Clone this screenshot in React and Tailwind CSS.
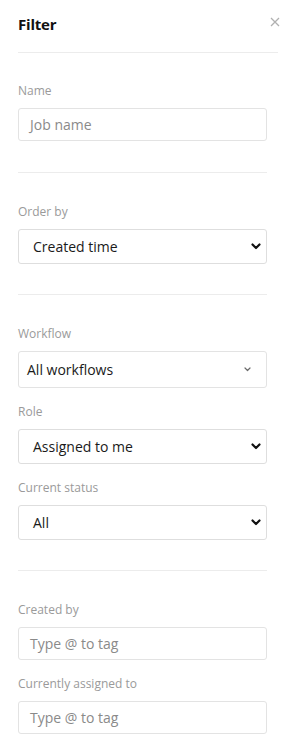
function Chevron({ thin }) {
  if (thin) {
    return (
      <svg width="7" height="5" viewBox="0 0 7 5" fill="none" stroke="#6b6b6b" strokeWidth="1.2" strokeLinecap="round" strokeLinejoin="round">
        <path d="M1 1l2.5 2.5L6 1" />
      </svg>
    );
  }
  return (
    <svg width="10" height="7" viewBox="0 0 10 7" fill="none" stroke="#111111" strokeWidth="2.2" strokeLinecap="round" strokeLinejoin="round">
      <path d="M1.5 1.5L5 5l3.5-3.5" />
    </svg>
  );
}

function Label({ children }) {
  return <div className="text-[12px] leading-[16px] text-[#9a9a9a] mb-[9px]">{children}</div>;
}

function TextInput({ placeholder }) {
  return (
    <div className="h-[33px] w-[249px] rounded-[3px] border border-[#e3e3e3] bg-white flex items-center pl-[11px] text-[14px] text-[#8a8a8a]">
      {placeholder}
    </div>
  );
}

function NativeSelect({ value }) {
  return (
    <div className="h-[35px] w-[249px] rounded-[3px] border border-[#dedede] bg-white flex items-center justify-between pl-[14px] pr-[5px] text-[14px] text-[#1a1a1a]">
      <span>{value}</span>
      <Chevron />
    </div>
  );
}

function CustomSelect({ value }) {
  return (
    <div className="h-[37px] w-[249px] rounded-[3px] border border-[#e3e3e3] bg-white flex items-center justify-between pl-[8px] pr-[15px] text-[14px] text-[#1a1a1a]">
      <span>{value}</span>
      <Chevron thin />
    </div>
  );
}

function Divider() {
  return <div className="h-px w-[249px] bg-[#ececec]" />;
}

export default function App() {
  return (
    <div
      className="w-[287px] h-[745px] bg-white overflow-hidden"
      style={{ fontFamily: '"Open Sans", "Noto Sans", Arial, sans-serif' }}
    >
      {/* HEADER */}
      <div className="flex items-start justify-between ml-[18px] mr-[9px] pt-[14px] h-[53px] border-b border-[#ececec]">
        <div className="text-[15px] leading-[20px] font-bold text-[#111111] tracking-[-0.2px]">Filter</div>
        <svg width="10" height="10" viewBox="0 0 10 10" stroke="#b0b0b0" strokeWidth="1.3" className="mt-[3px] -mr-[2px]">
          <path d="M1 1l8 8M9 1l-8 8" />
        </svg>
      </div>

      <div className="px-[18px]">
        {/* NAME */}
        <div className="pt-[30px]">
          <Label>Name</Label>
          <TextInput placeholder="Job name" />
        </div>

        <div className="pt-[31px]">
          <Divider />
        </div>

        {/* ORDER BY */}
        <div className="pt-[31px]">
          <Label>Order by</Label>
          <NativeSelect value="Created time" />
        </div>

        <div className="pt-[30px]">
          <Divider />
        </div>

        {/* WORKFLOW / ROLE / STATUS */}
        <div className="pt-[31px] flex flex-col gap-[16px]">
          <div>
            <Label>Workflow</Label>
            <CustomSelect value="All workflows" />
          </div>
          <div>
            <Label>Role</Label>
            <NativeSelect value="Assigned to me" />
          </div>
          <div>
            <Label>Current status</Label>
            <NativeSelect value="All" />
          </div>
        </div>

        <div className="pt-[30px]">
          <Divider />
        </div>

        {/* PEOPLE */}
        <div className="pt-[31px] flex flex-col gap-[16px]">
          <div>
            <Label>Created by</Label>
            <TextInput placeholder="Type @ to tag" />
          </div>
          <div>
            <Label>Currently assigned to</Label>
            <TextInput placeholder="Type @ to tag" />
          </div>
        </div>
      </div>
    </div>
  );
}
